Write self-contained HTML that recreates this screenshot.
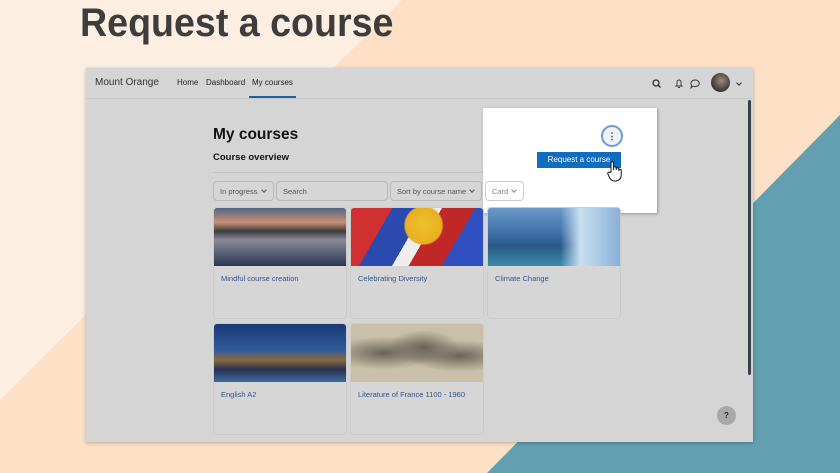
<!DOCTYPE html>
<html><head><meta charset="utf-8"><style>
*{box-sizing:border-box;margin:0;padding:0}
body{width:840px;height:473px;overflow:hidden;position:relative;font-family:"Liberation Sans",sans-serif;background:#fde0c6}
.abs{position:absolute}
.title{left:80px;top:1px;font-size:40px;font-weight:bold;color:#3d3d3d;letter-spacing:0px;transform:scaleX(0.94);transform-origin:left}
.win{left:86px;top:68px;width:667px;height:374px;background:#d5d5d5;box-shadow:0 1px 4px rgba(0,0,0,.25);overflow:hidden}
.nav{left:0;top:0;width:667px;height:31px;border-bottom:1px solid #c8c8c8;font-size:8px;color:#222;white-space:nowrap}
.card{position:absolute;width:134px;height:112px;background:#d6d6d6;border:1px solid #cbcbcb;border-radius:4px;overflow:hidden}
.card .img{height:58px}
.card .t{font-size:7.5px;color:#34538a;padding:8px 7px;white-space:nowrap}
.sel{position:absolute;top:113px;height:20px;border:1px solid #b8b8b8;border-radius:4px;font-size:7.5px;color:#555;padding:5px 6px;background:#d6d6d6;white-space:nowrap}
.ch{display:inline-block;width:4px;height:4px;border-right:1px solid #555;border-bottom:1px solid #555;transform:rotate(45deg);margin-left:4px;position:relative;top:-2px}
</style></head><body>
<svg class="abs" style="left:0;top:0" width="840" height="473">
<polygon points="0,0 402,0 0,400" fill="#fdeee2"/>
<polygon points="840,115 840,473 487,473" fill="#62a0b1"/>
</svg>
<div class="abs title">Request a course</div>
<div class="abs win">
 <div class="abs nav">
  <div class="abs" style="left:9px;top:9px;font-size:10px;color:#333">Mount Orange</div>
  <div class="abs" style="left:91px;top:10px">Home</div>
  <div class="abs" style="left:120px;top:10px">Dashboard</div>
  <div class="abs" style="left:166px;top:10px">My courses</div>
  <div class="abs" style="left:163px;top:28px;width:47px;height:2px;background:#1f5fa8"></div>
  <svg class="abs" style="left:565px;top:10px" width="60" height="12"><circle cx="5" cy="5" r="3" fill="none" stroke="#333" stroke-width="1.3"/><line x1="7" y1="7" x2="9.5" y2="9.5" stroke="#333" stroke-width="1.3"/><path d="M25 8 h6 l-1-1 v-3 a2 2 0 0 0-4 0 v3z M27 9.5 h2" fill="none" stroke="#333" stroke-width="0.9"/><path d="M44 2 a4 3.3 0 1 1 -2 6 l-2 2 l0.5-3 a4 3.3 0 0 1 3.5-5z" fill="none" stroke="#333" stroke-width="0.9"/></svg>
  <div class="abs" style="left:625px;top:5px;width:19px;height:19px;border-radius:50%;background:radial-gradient(circle at 55% 40%,#9a8a80,#3a3330 70%)"></div>
  <div class="abs" style="left:647px;top:12px"><span class="ch" style="border-color:#333"></span></div>
 </div>
 <div class="abs" style="left:662px;top:32px;width:3px;height:275px;background:#3a3f47;border-radius:2px"></div>
 <div class="abs" style="left:127px;top:58px;font-size:15.5px;font-weight:bold;color:#111">My courses</div>
 <div class="abs" style="left:127px;top:84px;font-size:9.5px;font-weight:bold;color:#111">Course overview</div>
 <div class="abs" style="left:127px;top:104px;width:442px;height:1px;background:#c5c5c5"></div>
 <div class="sel" style="left:127px;width:61px">In progress<span class="ch"></span></div>
 <div class="sel" style="left:190px;width:112px">Search</div>
 <div class="sel" style="left:304px;width:92px">Sort by course name<span class="ch"></span></div>
 <div class="abs" style="left:397px;top:40px;width:174px;height:105px;background:#fff;box-shadow:1px 1px 3px rgba(0,0,0,.3)"></div>
 <div class="sel" style="left:399px;width:39px;background:#fff;border-color:#ccc;color:#888">Card<span class="ch" style="border-color:#888"></span></div>
 <div class="abs" style="left:515px;top:57px;width:22px;height:22px;border-radius:50%;border:2px solid #6b9bd0;background:#eef2f7;font-size:9px;font-weight:bold;text-align:center;line-height:18px;color:#333">⋮</div>
 <div class="abs" style="left:451px;top:84px;width:84px;height:16px;background:#0f6cbf;color:#fff;font-size:8px;text-align:center;line-height:16px">Request a course</div>
 <svg class="abs" style="left:521px;top:92px" width="16" height="22" viewBox="0 0 16 22"><path d="M4 12 V3 a1.3 1.3 0 0 1 2.6 0 V10 V8 a1.3 1.3 0 0 1 2.6 0 V10 V9 a1.3 1.3 0 0 1 2.6 0 V11 V10.5 a1.2 1.2 0 0 1 2.4 0 V15 q0 5 -5 6 h-2 q-3 0 -5 -4 l-1.5 -3.5 a1.2 1.2 0 0 1 2 -1z" fill="#fff" stroke="#111" stroke-width="1"/></svg>
 <div class="card" style="left:127px;top:139px"><div class="img" style="background:linear-gradient(#556688 0%,#c89070 25%,#3a3a40 40%,#8a8a9a 55%,#2c3550 100%)"></div><div class="t">Mindful course creation</div></div>
 <div class="card" style="left:264px;top:139px"><div class="img" style="background:radial-gradient(circle at 55% 30%,#f0c030 0,#e8b020 22%,transparent 24%),linear-gradient(120deg,#d03030 0 25%,#2a4ab0 25% 45%,#eee 45% 55%,#c02828 55% 75%,#3050c0 75%)"></div><div class="t">Celebrating Diversity</div></div>
 <div class="card" style="left:401px;top:139px"><div class="img" style="background:linear-gradient(90deg,transparent 55%,#c8e0f0 70%,#8ab0d8),linear-gradient(#6a98c8,#3e6fa8 45%,#2a5a88 65%,#3a8aa8)"></div><div class="t">Climate Change</div></div>
 <div class="card" style="left:127px;top:255px"><div class="img" style="background:linear-gradient(#1a3a78 0%,#2f5a98 45%,#8a6a40 62%,#2a3050 78%,#3a6aa0 100%)"></div><div class="t">English A2</div></div>
 <div class="card" style="left:264px;top:255px"><div class="img" style="background:radial-gradient(ellipse at 25% 50%,#6a6458,transparent 40%),radial-gradient(ellipse at 55% 40%,#6a6458,transparent 35%),radial-gradient(ellipse at 82% 55%,#6a6458,transparent 35%),#c8c0a8"></div><div class="t">Literature of France 1100 - 1960</div></div>
 <div class="abs" style="left:631px;top:338px;width:19px;height:19px;border-radius:50%;background:#a8a8a8;font-size:8px;font-weight:bold;text-align:center;line-height:19px;color:#222">?</div>
</div>
</body></html>
